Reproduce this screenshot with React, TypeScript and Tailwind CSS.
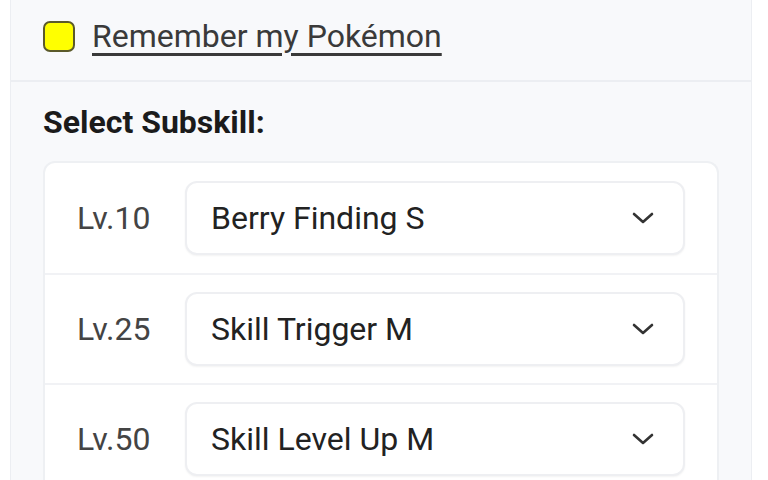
const subskills = [
  { level: 'Lv.10', name: 'Berry Finding S' },
  { level: 'Lv.25', name: 'Skill Trigger M' },
  { level: 'Lv.50', name: 'Skill Level Up M' },
];

function Chevron() {
  return (
    <svg width="22" height="12" viewBox="0 0 22 12" fill="none" stroke="#333" strokeWidth="2.6" strokeLinecap="round" strokeLinejoin="round">
      <path d="M2 2l9 8 9-8" />
    </svg>
  );
}

export default function App() {
  return (
    <div className="h-[480px] w-[768px] overflow-hidden bg-white font-['Roboto',sans-serif]">
      <div className="ml-[10px] w-[742px] border-x border-[#eceef2] bg-[#f8f9fb]">
        <div className="flex h-[82px] items-center gap-[17px] border-b-2 border-[#eceef2] pl-[32px] pb-[8px]">
          <span className="h-[31px] w-[32px] rounded-[7px] border-2 border-[#5b5a2a] bg-[#ffff00]" />
          <span className="text-[32px] leading-none text-[#3a3a3a] underline decoration-[3px] underline-offset-[6px]">
            Remember my Pokémon
          </span>
        </div>

        <div className="px-[32px] pt-[24px]">
          <h2 className="text-[32px] font-bold leading-none text-[#1b1b1b]">Select Subskill:</h2>

          <div className="mt-[23px] overflow-hidden rounded-t-[12px] border-2 border-b-0 border-[#eef0f3] bg-white">
            {subskills.map((s, i) => (
              <div
                key={s.level}
                className={`flex h-[110px] items-center pl-[32px] pr-[32px] ${i > 0 ? 'border-t-2 border-[#f1f2f5]' : ''}`}
              >
                <span className="w-[108px] text-[32px] leading-none text-[#444]">{s.level}</span>
                <div className="flex h-[74px] flex-1 items-center justify-between rounded-[12px] border-2 border-[#eeeff2] bg-white pl-[24px] pr-[29px] shadow-[0_1px_2px_rgba(0,0,0,0.05)]">
                  <span className="text-[32px] leading-none text-[#222]">{s.name}</span>
                  <Chevron />
                </div>
              </div>
            ))}
          </div>
        </div>
      </div>
    </div>
  );
}
